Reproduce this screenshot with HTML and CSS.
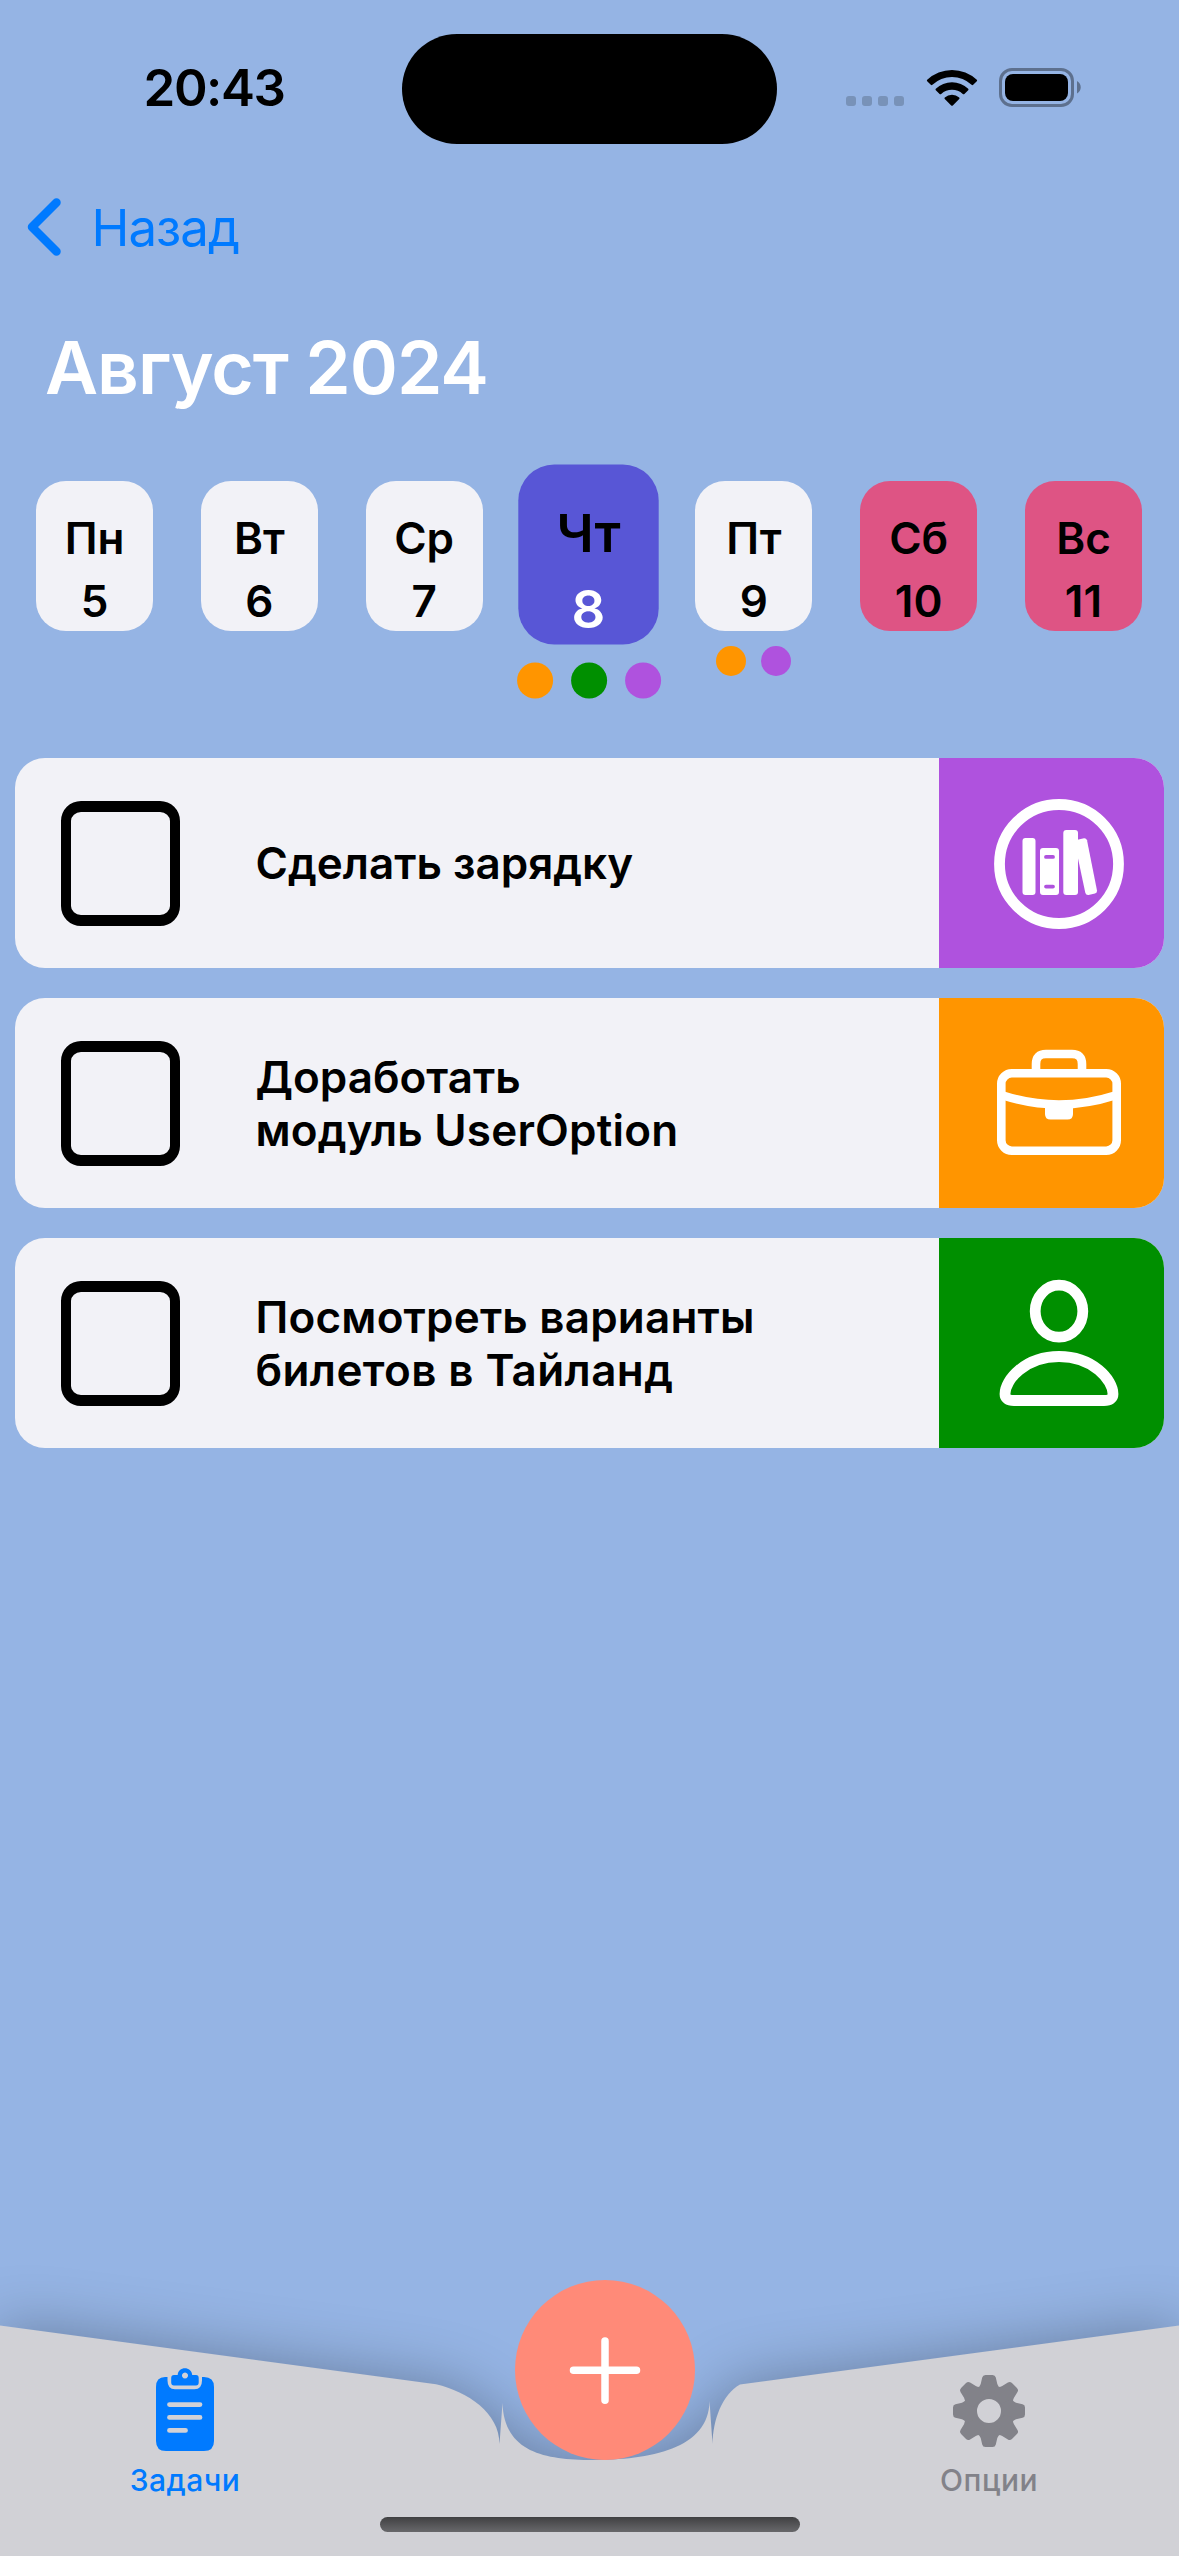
FILE: index.html
```html
<!DOCTYPE html>
<html lang="ru">
<head>
<meta charset="utf-8">
<title>Задачи</title>
<link rel="stylesheet" href="styles.css">
</head>
<body>
<div class="screen">
  <header class="status">
    <div class="status-time"><span>20:43</span></div>
    <div class="island"></div>
    <div class="status-icons">
      <svg class="cell" width="58" height="10" viewBox="0 0 58 10"><rect width="10" height="10" rx="3"/><rect x="16" width="10" height="10" rx="3"/><rect x="32" width="10" height="10" rx="3"/><rect x="48" width="10" height="10" rx="3"/></svg>
      <svg class="wifi" width="52" height="38" viewBox="0 0 52 38"><path d="M1.200 10.800A36 36 0 0 1 50.800 10.800Q51.500 11.600 50.800 12.300L47.200 15.800Q46.400 16.500 45.600 15.800A28.500 28.500 0 0 0 6.400 15.800Q5.600 16.500 4.800 15.800L1.200 12.300Q.5 11.600 1.200 10.800Z"/><path d="M9.800 19.700A23.500 23.500 0 0 1 42.200 19.700Q42.900 20.500 42.200 21.200L38.400 24.900Q37.600 25.600 36.800 24.900A16 16 0 0 0 15.200 24.900Q14.400 25.600 13.600 24.900L9.800 21.200Q9.100 20.500 9.800 19.700Z"/><path d="M18.800 28.500A11 11 0 0 1 33.200 28.500Q34 29.300 33.200 30L26.800 36.400Q26 37.200 25.200 36.400L18.800 30Q18 29.300 18.800 28.500Z"/></svg>
      <svg class="battery" width="83" height="39" viewBox="0 0 83 39"><rect class="battery-case" x="1.500" y="1.500" width="72" height="36" rx="11.500"/><rect x="6" y="6" width="63" height="27" rx="8"/><path class="battery-cap" d="M78 13C83 15.500 83 23 78 25.500Z"/></svg>
    </div>
  </header>

  <nav class="back">
    <svg width="34" height="58" viewBox="0 0 34 58"><path d="M29.500 4.500 5 29 29.500 53.500"/></svg>
    <span>Назад</span>
  </nav>

  <h1 class="month">Август 2024</h1>

  <section class="week">
    <div class="day"><div class="day-card"><span>Пн</span><span>5</span></div></div>
    <div class="day"><div class="day-card"><span>Вт</span><span>6</span></div></div>
    <div class="day"><div class="day-card"><span>Ср</span><span>7</span></div></div>
    <div class="day selected"><div class="day-card"><span>Чт</span><span class="num">8</span></div><div class="dots"><i class="orange"></i><i class="green"></i><i class="purple"></i></div></div>
    <div class="day"><div class="day-card"><span>Пт</span><span>9</span></div><div class="dots"><i class="orange"></i><i class="purple"></i></div></div>
    <div class="day weekend"><div class="day-card"><span>Сб</span><span>10</span></div></div>
    <div class="day weekend"><div class="day-card"><span>Вс</span><span>11</span></div></div>
  </section>

  <main class="tasks">
    <article class="task">
      <div class="check"></div>
      <p>Сделать зарядку</p>
      <div class="tag purple">
        <svg width="140" height="140" viewBox="989 793 140 140"><circle class="ring" cx="1059" cy="864" r="59.500"/><g class="solid"><rect x="1022.500" y="838" width="13" height="57" rx="3"/><path fill-rule="evenodd" d="M1043 848H1056Q1059 848 1059 851V892Q1059 895 1056 895H1043Q1040 895 1040 892V851Q1040 848 1043 848ZM1046 855a1.900 1.900 0 0 0 0 3.800H1053a1.900 1.900 0 0 0 0-3.800ZM1046 884.700a1.900 1.900 0 0 0 0 3.800H1053a1.900 1.900 0 0 0 0-3.800Z"/><rect x="1063.300" y="830" width="14.700" height="65" rx="3"/><path d="M1077.500 839.800 1084 838.200Q1086.300 838 1087 840.300L1097 890.500Q1097.300 892.800 1095 893.500L1088.500 895Q1086 895.300 1085.300 892.800L1077.500 856Z"/></g></svg>
      </div>
    </article>
    <article class="task">
      <div class="check"></div>
      <p>Доработать<br><span class="wide">модуль UserOption</span></p>
      <div class="tag orange">
        <svg width="140" height="140" viewBox="989 1033 140 140"><g class="ring case"><rect x="1001.300" y="1073.300" width="115.400" height="77.400" rx="10.500"/><path d="M1036 1073V1064Q1036 1054 1046 1054H1072Q1082 1054 1082 1064V1073M1003 1095.500Q1059 1113.500 1115 1095.500"/></g><path class="solid" d="M1045 1106H1073V1114Q1073 1119.500 1067.500 1119.500H1050.500Q1045 1119.500 1045 1114Z"/></svg>
      </div>
    </article>
    <article class="task">
      <div class="check"></div>
      <p><span class="wide">Посмотреть варианты</span><br><span class="wider">билетов в Тайланд</span></p>
      <div class="tag green">
        <svg width="140" height="140" viewBox="989 1273 140 140"><ellipse class="ring" cx="1059" cy="1311.200" rx="23.800" ry="26"/><path class="ring" d="M1014 1400.500H1104Q1113 1400.500 1113 1394C1113 1380 1093 1356.500 1059 1356.500S1005 1380 1005 1394Q1005 1400.500 1014 1400.500Z"/></svg>
      </div>
    </article>
  </main>

  <footer class="tabbar">
    <svg class="tabbar-shape" width="1179" height="231" viewBox="0 2325 1179 231"><path d="M0 2325.500 436 2384.300C468 2392 499.500 2413 499.500 2444L502.500 2403C504 2452 545 2460 592 2460C650 2460 709 2449 709.500 2401L712.500 2444C713 2420 722 2395 740 2384.600L1179 2325.500V2600H0Z"/></svg>
    <a class="tab active">
      <svg width="58" height="84" viewBox="156 2367 58 84"><path fill-rule="evenodd" d="M165 2377H167.500V2380.500Q167.500 2389.200 175 2389.200H194.500Q202 2389.200 202 2380.500V2377H204Q214 2377 214 2387V2441Q214 2451 204 2451H166Q156 2451 156 2441V2387Q156 2377 165 2377ZM169.500 2402.200a2.400 2.400 0 0 0 0 4.800H200a2.400 2.400 0 0 0 0-4.800ZM169.500 2415a2.400 2.400 0 0 0 0 4.800H200a2.400 2.400 0 0 0 0-4.800ZM169.500 2428a2.400 2.400 0 0 0 0 4.800H185.500a2.400 2.400 0 0 0 0-4.800Z"/><path fill-rule="evenodd" d="M174 2375H177.700C178 2366 191.700 2366 192.200 2375H196Q198.700 2375 198.700 2378V2382.500Q198.700 2385.500 196 2385.500H174Q171.200 2385.500 171.200 2382.500V2378Q171.200 2375 174 2375ZM185 2372.500a3 3 0 1 0 .01 0Z"/></svg>
      <span>Задачи</span>
    </a>
    <a class="tab">
      <svg width="72" height="84" viewBox="-36 -44 72 84"><defs><path id="tooth" d="M-12.500-22Q-9-24-8.300-27L-6.800-33.500Q-6.200-36-3.500-36H3.500Q6.200-36 6.800-33.500L8.300-27Q9-24 12.500-22L8-14H-8Z"/></defs><circle r="19" fill="none" stroke="currentColor" stroke-width="14"/><use href="#tooth"/><use href="#tooth" transform="rotate(45)"/><use href="#tooth" transform="rotate(90)"/><use href="#tooth" transform="rotate(135)"/><use href="#tooth" transform="rotate(180)"/><use href="#tooth" transform="rotate(225)"/><use href="#tooth" transform="rotate(270)"/><use href="#tooth" transform="rotate(315)"/></svg>
      <span>Опции</span>
    </a>
    <button class="fab" aria-label="+"><svg width="180" height="180" viewBox="0 0 180 180"><path d="M58.500 90.300H121.500M90 61V120.300"/></svg></button>
    <div class="home"></div>
  </footer>
</div>
</body>
</html>
```
FILE: styles.css
```css
* { box-sizing: border-box; }
body { margin: 0; }
svg { display: block; flex: none; }

.screen {
  width: 1179px;
  height: 2556px;
  overflow: hidden;
  display: flex;
  flex-direction: column;
  background: #95b4e4;
  color: #000;
  font-family: Inter, "Liberation Sans", sans-serif;
}

.status {
  height: 178px;
  padding-top: 34px;
  display: grid;
  grid-template-columns: 402px 375px 1fr;
}
.status-time {
  padding-left: 143.500px;
  font-size: 51px;
  line-height: 110px;
  height: 110px;
  margin-top: -1px;
  font-weight: 600;
  letter-spacing: -1.400px;
}
.island { height: 110px; border-radius: 55px; background: #000; }
.status-icons {
  height: 73px;
  padding-left: 69px;
  display: flex;
  align-items: flex-end;
}
.cell { fill: #7892b8; margin-bottom: 1px; }
.wifi { margin-left: 21.500px; }
.battery { margin-left: 21.500px; }
.battery-case { fill: none; stroke: #5d708e; stroke-width: 3; }
.battery-cap { fill: #5d708e; }

.back {
  height: 98px;
  padding-left: 27px;
  display: flex;
  align-items: center;
  gap: 30.500px;
  color: #007aff;
  font-size: 51px;
  letter-spacing: -1px;
}
.back path {
  fill: none;
  stroke: currentColor;
  stroke-width: 8.500;
  stroke-linecap: round;
  stroke-linejoin: round;
}

.month {
  margin: 0;
  height: 205px;
  padding: 47px 0 0 45px;
  color: #fff;
  font-size: 73px;
  line-height: 90px;
  font-weight: 600;
  letter-spacing: -1px;
}

.week {
  height: 277px;
  padding: 0 37px 0 36px;
  display: flex;
  justify-content: space-between;
}
.day { width: 117px; display: flex; flex-direction: column; align-items: center; gap: 15px; }
.day-card {
  width: 117px;
  height: 150px;
  padding-top: 26px;
  border-radius: 30px;
  background: #f2f2f7;
  display: flex;
  flex-direction: column;
  align-items: center;
  font-size: 44px;
  line-height: 63px;
  font-weight: 600;
}
.weekend .day-card { background: #de5484; }
.selected { transform: scale(1.2); transform-origin: 50% 82.500px; height: 195px; }
.selected .day-card { background: #5856d6; }
.num { color: #fff; }
.dots { display: flex; gap: 15px; }
.dots i { width: 30px; height: 30px; border-radius: 50%; }
.orange { background: #ff9500; }
.green { background: #008f00; }
.purple { background: #af52de; }

.tasks { flex: 1; padding: 0 15px; display: flex; flex-direction: column; gap: 30px; }
.task {
  height: 210px;
  padding-left: 46px;
  border-radius: 30px;
  overflow: hidden;
  background: #f2f2f7;
  display: flex;
  align-items: center;
}
.check {
  width: 119px;
  height: 125px;
  border: solid #000;
  border-width: 11px 10.500px;
  border-radius: 20px;
}
.task p {
  margin: 0 0 0 75.500px;
  padding-top: 1px;
  flex: 1;
  font-size: 44px;
  line-height: 53px;
  font-weight: 600;
  white-space: nowrap;
}
.wide { letter-spacing: .2px; }
.wider { letter-spacing: .4px; }
.tag {
  width: 225px;
  height: 210px;
  display: flex;
  align-items: center;
  padding-left: 50px;
}
.ring { fill: none; stroke: #fff; stroke-width: 10.800; }
.case { stroke-width: 8.600; }
.solid { fill: #fff; }

.tabbar {
  position: relative;
  height: 231px;
  display: grid;
  grid-template-columns: 370px 438px 362px;
}
.tabbar-shape {
  position: absolute;
  left: 0;
  top: 0;
  overflow: visible;
  fill: #d1d1d6;
  filter: drop-shadow(0 0 30px rgba(0, 0, 0, .3));
}
.tab {
  position: relative;
  padding-top: 42px;
  display: flex;
  flex-direction: column;
  align-items: center;
  gap: 10.500px;
  color: #828289;
  fill: currentColor;
  font-size: 30px;
  line-height: 36px;
  font-weight: 500;
  letter-spacing: .5px;
}
.tab + .tab { grid-column: 3; }
.active { color: #007aff; }
.fab {
  position: absolute;
  left: 515px;
  top: -45px;
  width: 180px;
  height: 180px;
  padding: 0;
  border: 0;
  border-radius: 50%;
  background: #ff8a78;
}
.fab path { stroke: #fff; stroke-width: 7.500; stroke-linecap: round; }
.home {
  position: absolute;
  left: 380px;
  bottom: 24px;
  width: 420px;
  height: 15px;
  border-radius: 8px;
  background: linear-gradient(#404042, #68686b);
}
```
